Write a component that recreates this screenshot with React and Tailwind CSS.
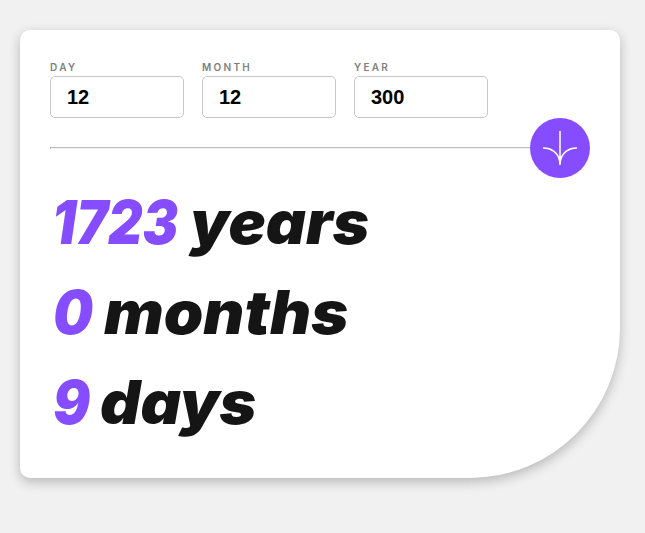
const fields = [
  { label: "DAY", value: "12" },
  { label: "MONTH", value: "12" },
  { label: "YEAR", value: "300" },
];

function Field({ label, value }) {
  return (
    <label className="flex w-[134px] flex-col">
      <span className="h-4 font-['Inter',sans-serif] text-[10px] font-semibold leading-[15px] tracking-[2.3px] text-[#7f7f7f]">
        {label}
      </span>
      <input
        defaultValue={value}
        className="h-[42px] w-full rounded-[5px] border border-[#c6c6c6] bg-white px-4 font-['Liberation_Sans',Arial,sans-serif] text-[20px] font-bold text-black outline-none"
      />
    </label>
  );
}

function Result({ value, unit, valueClass, scaleClass, unitClass }) {
  return (
    <p className="flex h-[90px] whitespace-nowrap font-['Inter',sans-serif] text-[60px] font-black italic leading-[88px] text-[#151515]">
      <span className={`shrink-0 text-[#854dff] ${valueClass}`}>
        <span className={`inline-block origin-left ${scaleClass}`}>{value}</span>
      </span>
      <span className={`origin-left ${unitClass}`}>{unit}</span>
    </p>
  );
}

export default function App() {
  return (
    <main className="h-[533px] w-[645px] bg-[#f1f1f1] pl-5 pt-[30px]">
      <section className="flex h-[448px] w-[600px] flex-col rounded-[10px] rounded-br-[150px] bg-white p-[30px] shadow-[0_4px_12px_rgba(0,0,0,0.24)]">
        <div className="flex gap-[18px]">
          {fields.map((field) => (
            <Field key={field.label} {...field} />
          ))}
        </div>
        <div className="flex h-[60px] items-center">
          <div className="h-[2px] flex-1 border-b border-l border-t border-b-[#eeeeee] border-l-[#9a9a9a] border-t-[#c0c0c0]" />
          <button aria-label="Calculate" className="flex h-[60px] w-[60px] items-center justify-center rounded-full bg-[#854dff]">
            <svg viewBox="0 0 46 44" className="h-[34px] w-9" fill="none" stroke="white" strokeWidth="2">
              <path d="M1 22.019C8.333 21.686 23 25.616 23 44M23 44V0M45 22.019C37.667 21.686 23 25.616 23 44" />
            </svg>
          </button>
        </div>
        <div>
          <Result value="1723" unit="years" valueClass="w-[140px] pl-[2px]" scaleClass="scale-x-[0.89]" unitClass="scale-x-[1.035]" />
          <Result value="0" unit="months" valueClass="w-[54px] pl-[3px]" scaleClass="scale-x-[0.94]" unitClass="scale-x-[1.055]" />
          <Result value="9" unit="days" valueClass="w-[50px] pl-[3px]" scaleClass="scale-x-[0.92]" unitClass="scale-x-[1.045]" />
        </div>
      </section>
    </main>
  );
}
